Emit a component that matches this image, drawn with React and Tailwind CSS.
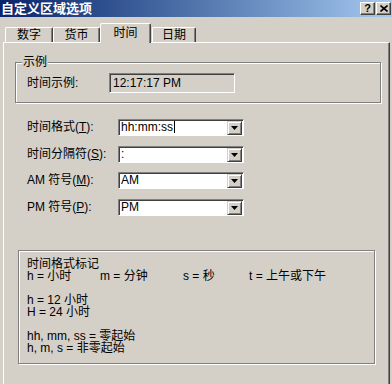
import React from "react";

const FONT = { fontFamily: "'Liberation Sans','Noto Sans CJK SC',sans-serif" };

function Combo({ value, cursor }) {
  return (
    <div className="relative w-[126px] h-[17px] bg-white border-t border-l border-t-[#808080] border-l-[#808080] border-b border-r border-b-white border-r-white shadow-[inset_1px_1px_0_#404040] flex items-center">
      <span className="pl-[2px] leading-none text-black">{value}</span>
      {cursor && <span className="w-px h-[12px] bg-black ml-[1px]" />}
      <div className="absolute right-[1px] top-[1px] bottom-0 w-[15px] bg-[#d4d0c8] border-t border-l border-t-[#d4d0c8] border-l-[#d4d0c8] border-b border-r border-b-[#404040] border-r-[#404040] shadow-[inset_1px_1px_0_#fff,inset_-1px_-1px_0_#808080] flex items-center justify-center">
        <svg width="7" height="4" viewBox="0 0 7 4"><path d="M0 0h7L3.5 4z" fill="#000" /></svg>
      </div>
    </div>
  );
}

function Row({ label, value, cursor, mt }) {
  return (
    <div className={`flex items-center ${mt}`}>
      <div className="w-[91px] ml-[23px] whitespace-nowrap">{label}</div>
      <Combo value={value} cursor={cursor} />
    </div>
  );
}

function Tab({ label, w, selected, ml }) {
  if (selected) {
    return (
      <div className={`relative z-10 h-[20px] -mb-px ${w} bg-[#d4d0c8] border-l border-t border-white border-r border-r-[#404040] shadow-[inset_-1px_0_0_#808080] rounded-t-[2px] flex items-center justify-center pb-[2px]`}>
        {label}
      </div>
    );
  }
  return (
    <div className={`h-[15px] ${w} ${ml || ""} bg-[#d4d0c8] border-l border-t border-white border-r border-r-[#404040] shadow-[inset_-1px_0_0_#808080] rounded-t-[2px] flex items-center justify-center`}>
      {label}
    </div>
  );
}

export default function App() {
  return (
    <div className="w-[392px] h-[384px] bg-[#d4d0c8] overflow-hidden text-[12px] text-black" style={FONT}>
      {/* title bar */}
      <div className="h-[17px] flex items-center justify-between bg-gradient-to-r from-[#0a246a] to-[#a6caf0]">
        <span className="pl-[1px] text-white font-bold text-[13px] leading-none">自定义区域选项</span>
        <div className="flex gap-[1px] pr-[1px]">
          <div className="w-[15px] h-[13px] bg-[#d4d0c8] border-t border-l border-white border-b border-r border-b-[#404040] border-r-[#404040] shadow-[inset_-1px_-1px_0_#808080] flex items-center justify-center font-bold text-[11px] leading-none">?</div>
          <div className="w-[15px] h-[13px] bg-[#d4d0c8] border-t border-l border-white border-b border-r border-b-[#404040] border-r-[#404040] shadow-[inset_-1px_-1px_0_#808080] flex items-center justify-center">
            <svg width="8" height="7" viewBox="0 0 8 7"><path d="M0.5 0.5L7.5 6.5M7.5 0.5L0.5 6.5" stroke="#000" strokeWidth="1.6" /></svg>
          </div>
        </div>
      </div>

      {/* tabs */}
      <div className="h-[25px] flex items-end pl-[5px]">
        <Tab label="数字" w="w-[48px]" />
        <Tab label="货币" w="w-[47px]" />
        <Tab label="时间" w="w-[51px]" selected />
        <Tab label="日期" w="w-[44px]" ml="ml-[1px]" />
      </div>

      {/* panel */}
      <div className="ml-[3px] w-[387px] h-[360px] border-l border-t border-white border-r border-r-[#404040] shadow-[inset_-1px_0_0_#808080]">
        {/* 示例 group */}
        <div className="relative mt-[19px] ml-[11px] w-[366px] border border-[#808080] shadow-[1px_1px_0_#fff,inset_1px_1px_0_#fff] pt-[10px] pb-[9px] pl-[11px] flex items-center">
          <span className="absolute -top-[8px] left-[6px] bg-[#d4d0c8] px-[1px] leading-[14px]">示例</span>
          <div className="w-[82px]">时间示例:</div>
          <div className="w-[126px] h-[20px] bg-[#d4d0c8] border-t border-l border-t-[#808080] border-l-[#808080] border-b border-r border-b-white border-r-white shadow-[inset_1px_1px_0_#404040] flex items-center pl-[3px]">
            12:17:17 PM
          </div>
        </div>

        <Row mt="mt-[15px]" label={<>时间格式(<u>T</u>):</>} value="hh:mm:ss" cursor />
        <Row mt="mt-[9px]" label={<>时间分隔符(<u>S</u>):</>} value=":" />
        <Row mt="mt-[8px]" label={<>AM 符号(<u>M</u>):</>} value="AM" />
        <Row mt="mt-[9px]" label={<>PM 符号(<u>P</u>):</>} value="PM" />

        {/* legend group */}
        <div className="mt-[34px] ml-[14px] w-[357px] h-[114px] border border-[#808080] shadow-[1px_1px_0_#fff,inset_1px_1px_0_#fff] pt-[7px] pl-[8px] leading-[12px]">
          <div>时间格式标记</div>
          <div className="flex whitespace-nowrap">
            <span className="w-[73px]">h = 小时</span>
            <span className="w-[83px]">m = 分钟</span>
            <span className="w-[66px]">s = 秒</span>
            <span>t = 上午或下午</span>
          </div>
          <div className="h-[12px]" />
          <div>h = 12 小时</div>
          <div>H = 24 小时</div>
          <div className="h-[12px]" />
          <div>hh, mm, ss = 零起始</div>
          <div>h, m, s = 非零起始</div>
        </div>
      </div>
    </div>
  );
}
